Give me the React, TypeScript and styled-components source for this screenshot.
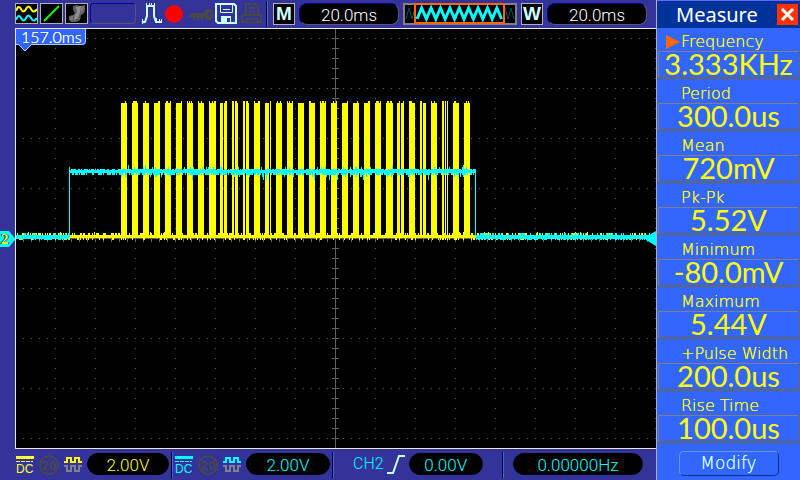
import React from "react";
import styled, { createGlobalStyle } from "styled-components";

const color = {
  chrome: "#333399",
  panel: "#3366ff",
  header: "#003399",
  yellow: "#ffff00",
  cyan: "#00ffff",
  ice: "#ccffff",
  orange: "#ff6600",
  dim: "#484848",
  grid: "#606060",
  frame: "#808080",
};

const thin = `"DejaVu Sans Light", "DejaVu Sans", sans-serif`;
const readoutFont = `Roboto, sans-serif`;

const GlobalStyle = createGlobalStyle`
  *, *::before, *::after { box-sizing: border-box; }
  body { margin: 0; background: ${color.chrome}; font-family: ${thin}; }
  button { padding: 0; font: inherit; cursor: pointer; }
  dl, dt, dd, h1 { margin: 0; }
  svg { display: block; }
`;

const Page = styled.div`
  display: grid;
  grid-template-columns: minmax(0, 1fr) 144px;
  min-height: 100vh;
`;

const Scope = styled.main`
  display: grid;
  grid-template-rows: 28px minmax(0, 1fr) 31px;
  background: ${color.chrome};
`;

const Toolbar = styled.header`
  display: flex;
  padding: 3px 0 0 15px;
`;

const ToolGroup = styled.div`
  display: flex;
  flex: none;
  gap: 2px;
`;

const ToolButton = styled.button<{ $boxed?: boolean }>`
  height: 21px;
  flex: none;
  background: ${(p) => (p.$boxed ? "#000" : "transparent")};
  border: ${(p) => (p.$boxed ? "1px solid #b0b0b8" : "0")};
`;

const EmptySlot = styled.div`
  width: 46px;
  height: 21px;
  border: 1px solid;
  border-color: #000099 #555577 #555577 #000099;
  border-radius: 4px;
`;

const Divider = styled.div`
  width: 2px;
  height: 26px;
  margin: -2px 0 0 2px;
  background: linear-gradient(90deg, #000 50%, ${color.panel} 50%);
`;

const TimebaseGroup = styled.div`
  display: flex;
  flex: 1;
  gap: 4px;
  padding: 0 9px 0 5px;
`;

const LetterBox = styled.div`
  flex: none;
  width: 22px;
  height: 22px;
  border: 1px solid #b0b0b8;
  background: #000;
  color: ${color.ice};
  font: bold 19px/20px "Liberation Sans", sans-serif;
  display: flex;
  justify-content: center;
`;

const Readout = styled.div<{ $tone: string; $bevel?: boolean }>`
  flex: 1;
  height: 22px;
  border: 1px solid;
  border-color: ${(p) => (p.$bevel ? "#000099 #555577 #555577 #000099" : "#000")};
  border-radius: ${(p) => (p.$bevel ? "8px" : "11px")};
  background: #000;
  color: ${(p) => p.$tone};
  font: 300 17px/22px ${readoutFont};
  text-align: center;
`;

const Preview = styled.div`
  flex: none;
  width: 114px;
  height: 22px;
`;

const ScreenRow = styled.section`
  display: grid;
  grid-template-columns: 15px minmax(0, 1fr);
  position: relative;
`;

const Screen = styled.div`
  grid-column: 2;
  position: relative;
  background: #000;
  border: solid #e8e8e8;
  border-width: 1px 0 1px 1px;
`;

const Plot = styled.svg`
  width: 100%;
  height: 100%;
  position: absolute;
  inset: 0;
`;

const TriggerTag = styled.div`
  position: absolute;
  top: 0;
  left: 0;
  height: 16px;
  padding: 0 3px 0 5px;
  background: ${color.panel};
  border: solid #99ccff;
  border-width: 0 1px 1px 0;
  border-radius: 0 0 4px 0;
  color: #fff;
  font: 300 16px/16px Lato, sans-serif;
  text-shadow: 0 0 currentColor;
`;

const TagPointer = styled.svg`
  position: absolute;
  left: 2px;
  top: 15px;
`;

const ChannelMarker = styled.div`
  position: absolute;
  left: 0;
  top: 203px;
  width: 15px;
  height: 16px;
  background: ${color.cyan};
  clip-path: polygon(0 0, 60% 0, 100% 45%, 100% 55%, 60% 100%, 0 100%);
  color: ${color.yellow};
  text-shadow: -1px 0 ${color.header}, 1px 0 ${color.header};
  font: bold 15px/16px "Liberation Serif", serif;
  padding-left: 1px;
`;

const LevelMarker = styled.svg`
  position: absolute;
  right: 0;
  top: 202px;
`;

const StatusBar = styled.footer`
  display: grid;
  grid-template-columns: 171fr 161fr 170fr 154fr;
`;

const StatusCell = styled.div<{ $divided?: boolean }>`
  display: flex;
  align-items: flex-start;
  gap: 4px;
  padding: 4px 2px 0 ${(p) => (p.$divided ? "4px" : "16px")};
  background: ${(p) =>
    p.$divided
      ? `linear-gradient(90deg, #000 1px, ${color.panel} 1px, ${color.panel} 2px, transparent 2px) 0 3px / 100% 26px no-repeat`
      : "none"};
`;

const TriggerCell = styled(StatusCell)`
  gap: 3px;
  padding-left: 21px;
  padding-right: 19px;
`;

const CounterCell = styled(StatusCell)`
  padding-left: 11px;
  padding-right: 13px;
`;

const TriggerSource = styled.span`
  color: ${color.cyan};
  font: 300 16px/22px ${readoutFont};
`;

const MeasurePanel = styled.aside`
  display: flex;
  flex-direction: column;
  background: ${color.panel};
  border-left: 1px solid #b0b0b8;
`;

const PanelHeader = styled.div`
  display: flex;
  align-items: center;
  justify-content: space-between;
  height: 28px;
  padding: 0 2px 0 19px;
  background: ${color.header};
  border-top: 1px solid #6666ff;
`;

const PanelTitle = styled.h1`
  color: #fff;
  font: 400 20px/24px "Noto Sans", sans-serif;
`;

const CloseButton = styled.button`
  width: 21px;
  height: 21px;
  border: 0;
  background: #ff3300;
`;

const MeasureList = styled.dl`
  display: grid;
  gap: 1px;
  padding: 0 1px;
`;

const MeasureName = styled.dt`
  display: flex;
  align-items: center;
  gap: 1px;
  height: 23px;
  padding: 5px 0 0 8px;
  color: ${color.yellow};
  font: 200 16px/18px ${thin};
  text-shadow: 0 0 currentColor;
  white-space: nowrap;
`;

const Cursor = styled.svg`
  flex: none;
  width: 14px;
  height: 14px;
`;

const MeasureValue = styled.dd`
  height: 28px;
  border: solid;
  border-width: 1px 1px 2px 1px;
  border-color: ${color.frame} #666 #666 ${color.frame};
  color: ${color.yellow};
  font: 400 29px/23px Lato, sans-serif;
  text-align: center;
  white-space: nowrap;
`;

const ModifyButton = styled.button`
  align-self: center;
  width: 100px;
  height: 25px;
  margin: 8px 0 4px;
  border: 1px solid;
  border-color: #6699cc ${color.header} ${color.header} #6699cc;
  border-radius: 5px;
  background: transparent;
  color: ${color.ice};
  font: 200 17px/23px ${thin};
  text-shadow: 0 0 currentColor;
`;

const measurements = [
  ["Frequency", "3.333KHz"],
  ["Period", "300.0us"],
  ["Mean", "720mV"],
  ["Pk-Pk", "5.52V"],
  ["Minimum", "-80.0mV"],
  ["Maximum", "5.44V"],
  ["+Pulse Width", "200.0us"],
  ["Rise Time", "100.0us"],
];

/* Repeatable pseudo-random value in 0..1, so the trace noise never flickers. */
const noise = (n: number) => {
  const v = Math.sin(n * 127.1 + 11.7) * 43758.5453;
  return v - Math.floor(v);
};

const rect = (x: number, y: number, w: number, h: number) => `M${x} ${y}h${w}v${h}h${-w}z`;

const range = (from: number, to: number, step = 1) => {
  const out: number[] = [];
  for (let v = from; v < to; v += step) out.push(v);
  return out;
};

/* Plot coordinates: 640 x 419, one unit per sample. */
const gridPath = [
  ...range(9, 419, 50).filter((y) => y !== 209).flatMap((y) => range(7, 640, 8).map((x) => rect(x, y, 1, 1))),
  ...range(39, 640, 40).flatMap((x) => range(9, 419, 10).map((y) => rect(x, y, 1, 1))),
  rect(0, 209, 640, 1),
  rect(319, 0, 1, 419),
  ...range(7, 640, 8).map((x) => rect(x, 207, 1, 6)),
  ...range(9, 419, 10).map((y) => rect(316, y, 7, 1)),
].join("");

const bursts: [number, number][] = [
  [105, 6], [116, 6], [127, 6], [138, 6], [149, 6], [160, 6], [171, 6], [182, 6], [193, 7],
  [204, 3], [208, 3], [216, 2], [219, 3], [227, 2], [230, 3], [238, 6], [249, 4], [254, 1],
  [260, 6], [271, 6], [282, 6], [293, 6], [304, 6], [315, 6], [326, 6], [337, 6], [348, 6],
  [359, 6], [370, 7], [381, 3], [385, 3], [393, 6], [404, 2], [407, 3], [415, 6], [426, 2],
  [429, 1], [431, 1], [437, 6], [448, 6],
];

const yellowPath = [
  ...bursts.flatMap(([x, w]) =>
    range(x, x + w).map((c) => {
      const top = noise(c) > 0.6 || w < 3 ? 72 : 74;
      return rect(c, top, 1, 209 - top);
    })
  ),
  ...range(0, 640).map((x) => {
    const n = noise(x + 900);
    const top = n > 0.96 ? 203 : n > 0.6 ? 204 : 206;
    return rect(x, top, 1, (noise(x + 1700) > 0.8 ? 211 : 209) - top);
  }),
].join("");

const cyanPath = [
  ...range(0, 53).concat(range(460, 640)).map((x) => {
    const top = noise(x + 40) > 0.75 ? 204 : 206;
    return rect(x, top, 1, (noise(x + 60) > 0.6 ? 211 : 210) - top);
  }),
  ...range(53, 460).map((x) => {
    const n = noise(x + 300);
    const m = noise(x + 500);
    const active = x > 104;
    const top = active && n > 0.98 ? 136 : active && n > 0.88 ? 138 : n > 0.7 ? 141 : 140;
    const bottom = active && m > 0.97 ? 151 : active && m > 0.88 ? 148 : m > 0.6 ? 144 : 146;
    return rect(x, top, 1, bottom - top);
  }),
  rect(53, 138, 1, 70),
  rect(459, 140, 1, 68),
].join("");

const zigzag = (from: number, to: number, step: number) =>
  "M" + range(from, to, step).map((x, i) => `${x} ${i % 2 ? 5 : 16}`).join("L");

const sine = (y: number) =>
  `M0 ${y + 2}Q2.5 ${y - 5} 5 ${y}T10 ${y}T15 ${y}T21 ${y}`;

const CouplingIcon = ({ tone }: { tone: string }) => (
  <svg width="19" height="22" viewBox="0 0 19 22" role="img" aria-label="DC coupling">
    <path d="M0 3h18v3H0z" fill={tone} />
    <path d="M0 8.500h17" stroke={tone} strokeDasharray="4 1" />
    <text x="0" y="20" fill={tone} fontFamily="Liberation Sans, sans-serif" fontSize="12">DC</text>
  </svg>
);

const LimitIcon = () => (
  <svg width="21" height="22" viewBox="0 0 21 22" role="img" aria-label="20 MHz limit off">
    <circle cx="10" cy="12" r="9" fill="none" stroke={color.dim} strokeWidth="2" />
    <text x="10" y="17" textAnchor="middle" fill={color.dim} fontFamily="Liberation Sans, sans-serif" fontWeight="bold" fontSize="13">20</text>
  </svg>
);

const InvertIcon = ({ tone }: { tone: string }) => (
  <svg width="19" height="22" viewBox="0 0 19 22" fill="none" strokeWidth="2" role="img" aria-label="Invert">
    <path d="M0 9h3V5h4v4h4V5h4v4h3" stroke={tone} />
    <path d="M0 13h3v5h4v-5h4v5h4v-5h3" stroke="#808090" />
  </svg>
);

export default function App() {
  return (
    <>
      <GlobalStyle />
      <Page>
        <Scope>
          <Toolbar>
            <ToolGroup>
              <ToolButton $boxed aria-label="Channels">
                <svg width="21" height="19" fill="none" strokeWidth="2">
                  <path d={sine(5)} stroke={color.yellow} />
                  <path d={sine(14)} stroke={color.cyan} />
                </svg>
              </ToolButton>
              <ToolButton $boxed aria-label="Line display">
                <svg width="21" height="19"><path d="M3 17L18 2" stroke="#00ff00" strokeWidth="2" /></svg>
              </ToolButton>
              <ToolButton $boxed aria-label="Persistence">
                <svg width="21" height="19">
                  <path d="M7 2l4-1 3 1 5-1v6l-2 3-2 1-1 5-4 2H5l-2-2v-4l4-1 2-2-2-3z" fill="#606060" />
                  <path d="M10 3l5-1-1 6-2 6-4 2 1-5 2-3z" fill="#909090" />
                  <path d="M15 2l3 1-1 4-2 1zM4 13l3-1v4H4z" fill="#787878" />
                </svg>
              </ToolButton>
              <EmptySlot />
              <ToolButton aria-label="Pulse trigger">
                <svg width="25" height="21" viewBox="0 0 25 21" fill="none" stroke={color.ice}>
                  <path d="M4 19h3l2-6V3h7v10l2 6h6" strokeWidth="2" />
                  <path d="M4.500 16v5M7.500 15v4M8.500 0v4M11.500 0v4M13.500 0v4M16.500 0v4M18.500 15v4M21.500 16v4M23.500 16v3" />
                </svg>
              </ToolButton>
              <ToolButton aria-label="Record">
                <svg width="22" height="21"><circle cx="9" cy="11" r="9" fill="#ff0000" /></svg>
              </ToolButton>
              <ToolButton aria-label="Key lock">
                <svg width="24" height="21" fill={color.dim}>
                  <path d="M3 10h14v4h-3v3h-2v-2h-2v3H8v-4H6v3H4v-3H0v-2z" />
                  <path fillRule="evenodd" d="M17 6h5l2 3v5l-2 3h-4l-3-3V9zM19 9v5h2V9z" />
                </svg>
              </ToolButton>
              <ToolButton aria-label="Save">
                <svg width="22" height="21" fill="none">
                  <path d="M1 1h18l2 2v17H3l-2-2z" stroke={color.ice} strokeWidth="2" />
                  <path d="M5.500 2v7.500h12V2M8 6.500h7" stroke={color.ice} />
                  <path d="M6 13h10v7H6z" fill={color.ice} />
                  <path d="M12 15h3v4h-3z" fill={color.chrome} />
                </svg>
              </ToolButton>
              <ToolButton aria-label="Print">
                <svg width="25" height="21" fill="none" stroke={color.dim} strokeWidth="2">
                  <path d="M7 12V1h9l3 3v8M10 5h6M10 9h6" />
                  <path d="M3 12h19v7H3zM6 16h13" />
                </svg>
              </ToolButton>
            </ToolGroup>
            <Divider />
            <TimebaseGroup>
              <LetterBox>M</LetterBox>
              <Readout $tone="#fff" $bevel>20.0ms</Readout>
              <Preview>
                <svg width="114" height="22" viewBox="0 0 114 22" fill="none">
                  <rect x="1" y="1" width="112" height="20" fill="#000" stroke={color.frame} strokeWidth="2" />
                  <path d={zigzag(3, 112, 3)} stroke="#005566" />
                  <rect x="12" y="1" width="89" height="19" fill="#000" stroke={color.orange} strokeWidth="2" />
                  <path d={zigzag(14, 101, 4.7)} stroke={color.cyan} strokeWidth="3" />
                </svg>
              </Preview>
              <LetterBox>W</LetterBox>
              <Readout $tone="#fff" $bevel>20.0ms</Readout>
            </TimebaseGroup>
          </Toolbar>

          <ScreenRow>
            <ChannelMarker>2</ChannelMarker>
            <Screen>
              <Plot viewBox="0 0 640 419" preserveAspectRatio="none" shapeRendering="crispEdges" role="img" aria-label="Waveforms of channels 1 and 2">
                <path d={gridPath} fill={color.grid} />
                <path d={yellowPath} fill={color.yellow} />
                <path d={cyanPath} fill={color.cyan} />
              </Plot>
              <TriggerTag>157.0ms</TriggerTag>
              <TagPointer width="14" height="8">
                <path d="M0 0h14L7 7z" fill={color.panel} />
                <path d="M0 0L7 7L14 0" fill="none" stroke="#99ccff" />
              </TagPointer>
              <LevelMarker width="10" height="15"><path d="M10 0v15L0 9V6z" fill={color.cyan} /></LevelMarker>
            </Screen>
          </ScreenRow>

          <StatusBar>
            <StatusCell>
              <CouplingIcon tone="#ffff33" />
              <LimitIcon />
              <InvertIcon tone={color.yellow} />
              <Readout $tone={color.yellow}>2.00V</Readout>
            </StatusCell>
            <StatusCell $divided>
              <CouplingIcon tone={color.cyan} />
              <LimitIcon />
              <InvertIcon tone={color.cyan} />
              <Readout $tone={color.cyan}>2.00V</Readout>
            </StatusCell>
            <TriggerCell $divided>
              <TriggerSource>CH2</TriggerSource>
              <svg width="19" height="22" role="img" aria-label="Rising edge">
                <path d="M0 20h6L12 3h6" fill="none" stroke={color.ice} strokeWidth="2" />
              </svg>
              <Readout $tone={color.cyan}>0.00V</Readout>
            </TriggerCell>
            <CounterCell $divided>
              <Readout $tone={color.cyan}>0.00000Hz</Readout>
            </CounterCell>
          </StatusBar>
        </Scope>

        <MeasurePanel>
          <PanelHeader>
            <PanelTitle>Measure</PanelTitle>
            <CloseButton aria-label="Close">
              <svg width="21" height="21"><path d="M5 5l11 11M16 5L5 16" stroke="#fff" strokeWidth="3" /></svg>
            </CloseButton>
          </PanelHeader>
          <MeasureList>
            {measurements.map(([name, value], i) => (
              <div key={name}>
                <MeasureName>
                  <Cursor aria-hidden="true">{i === 0 && <path d="M0 0l14 7-14 7z" fill={color.orange} />}</Cursor>
                  {name}
                </MeasureName>
                <MeasureValue>{value}</MeasureValue>
              </div>
            ))}
          </MeasureList>
          <ModifyButton>Modify</ModifyButton>
        </MeasurePanel>
      </Page>
    </>
  );
}
